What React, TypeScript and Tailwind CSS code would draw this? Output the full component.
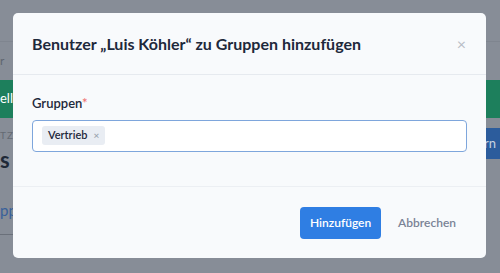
export default function App() {
  return (
    <div className="relative w-[500px] h-[273px] overflow-hidden bg-[#878d97] font-['Lato',sans-serif]">
      {/* page under the overlay */}
      <div className="flex flex-col h-full">
        <div className="h-[42px] border-b border-[#7f858f]" />
        <div className="h-[38px] flex items-center text-[12px] text-[#5f6670]">r</div>
        <div className="h-[38px] flex items-center justify-between bg-[#1d7f5c] text-white text-[13px]">
          <span>ellt</span>
        </div>
        <div className="flex justify-between pt-[10px]">
          <div className="flex flex-col">
            <span className="text-[10px] tracking-widest text-[#646a73]">TZE</span>
            <span className="text-[22px] font-bold text-[#1f2937] leading-[34px]">s</span>
          </div>
          <div className="h-[31px] w-[60px] bg-[#2c5c9c] text-[#c7d2e0] text-[13px] flex items-center justify-end pr-[4px]">rn</div>
        </div>
        <div className="pt-[22px] text-[15px] text-[#37609a]">pp</div>
        <div className="mt-[12px] border-b border-[#6a707a] w-[60px]" />
      </div>

      {/* modal */}
      <div className="absolute left-[13px] top-[13px] w-[473px] h-[245px] bg-[#f8fafc] rounded-[5px] flex flex-col">
        <div className="h-[62px] flex items-center justify-between pl-[19px] pr-[20px] border-b border-[#e6eaef]">
          <h2 className="text-[16px] font-bold text-[#1e293b]">Benutzer „Luis Köhler“ zu Gruppen hinzufügen</h2>
          <span className="text-[16px] text-[#b8bec7] leading-none">×</span>
        </div>
        <div className="h-[112px] px-[19px] pt-[19px] border-b border-[#eceff3]">
          <div className="text-[13px] font-semibold text-[#1e293b] mb-[6px]">
            Gruppen<span className="text-[#f07575]">*</span>
          </div>
          <div className="h-[32px] bg-white border border-[#7ea6dc] rounded-[4px] flex items-center px-[9px]">
            <span className="flex items-center gap-[6px] bg-[#e9edf3] rounded-[3px] h-[19px] pl-[6px] pr-[6px] text-[11px] font-semibold text-[#1e293b]">
              Vertrieb<span className="text-[#9aa3ae] text-[10px]">×</span>
            </span>
          </div>
        </div>
        <div className="flex-1 flex items-center justify-end pr-[18px] gap-[5px]">
          <button className="h-[32px] w-[81px] rounded-[4px] bg-[#2f7ee3] text-white text-[12px] font-semibold">Hinzufügen</button>
          <button className="h-[32px] px-[12px] text-[#7a8396] text-[12px] font-semibold">Abbrechen</button>
        </div>
      </div>
    </div>
  )
}
